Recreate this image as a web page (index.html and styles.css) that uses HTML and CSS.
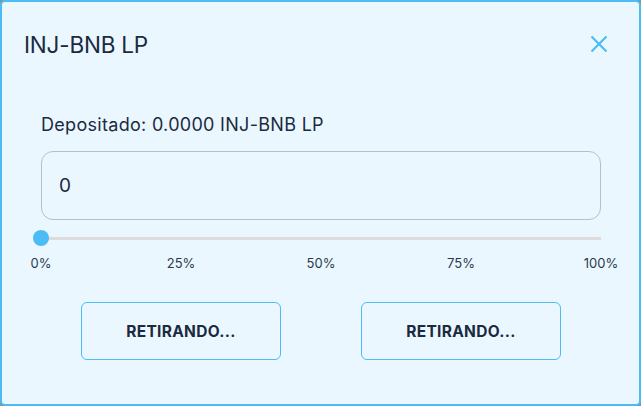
FILE: index.html
```html
<!DOCTYPE html>
<html lang="pt">
<head>
<meta charset="utf-8">
<link rel="stylesheet" href="styles.css">
</head>
<body>
<div class="modal">
  <div class="modal-header">
    <h2 class="modal-title">INJ-BNB LP</h2>
    <button class="close-btn" aria-label="Fechar">
      <svg width="18" height="18" viewBox="0 0 18 18"><path d="M1.5 1.5 L16.5 16.5 M16.5 1.5 L1.5 16.5" stroke="#4bbcf5" stroke-width="2.2" stroke-linecap="butt"/></svg>
    </button>
  </div>
  <div class="modal-body">
    <div class="deposited">Depositado: 0.0000 INJ-BNB LP</div>
    <div class="amount-input">0</div>
    <div class="slider">
      <div class="track"></div>
      <div class="thumb"></div>
    </div>
    <div class="marks">
      <span class="mark"><span>0%</span></span>
      <span class="mark"><span>25%</span></span>
      <span class="mark"><span>50%</span></span>
      <span class="mark"><span>75%</span></span>
      <span class="mark"><span>100%</span></span>
    </div>
    <div class="actions">
      <button class="action-btn">RETIRANDO...</button>
      <button class="action-btn">RETIRANDO...</button>
    </div>
  </div>
</div>
</body>
</html>
```
FILE: styles.css
```css
html, body {
  margin: 0;
  padding: 0;
  background: #8a8f94;
}
body {
  font-family: "Inter", "Lato", sans-serif;
  color: #1b2a3f;
}
.modal {
  width: 641px;
  height: 406px;
  box-sizing: border-box;
  border: 2px solid #4bbcf5;
  border-radius: 5px;
  background: #ebf7ff;
}
.modal-header {
  display: flex;
  align-items: center;
  justify-content: space-between;
  padding: 27px 31px 0 22px;
  height: 30px;
}
.modal-title {
  margin: 0;
  font-size: 22.5px;
  font-weight: 400;
  letter-spacing: -0.2px;
}
.close-btn {
  border: 0;
  background: none;
  padding: 0;
  width: 18px;
  height: 18px;
  display: flex;
}
.modal-body {
  padding: 55px 38px 0 39px;
}
.deposited {
  font-size: 18px;
  line-height: 22px;
  letter-spacing: 0.3px;
}
.amount-input {
  margin-top: 15px;
  height: 69px;
  box-sizing: border-box;
  border: 1px solid #b4bfcb;
  border-radius: 12px;
  padding: 0 17px;
  display: flex;
  align-items: center;
  font-size: 19px;
}
.slider {
  position: relative;
  height: 20px;
  margin-top: 9px;
}
.track {
  position: absolute;
  left: 0;
  right: 0;
  top: 8px;
  height: 3px;
  background: #dcdcdc;
}
.thumb {
  position: absolute;
  left: -8px;
  top: 1px;
  width: 16px;
  height: 16px;
  border-radius: 50%;
  background: #4bbcf5;
}
.marks {
  display: flex;
  justify-content: space-between;
  font-size: 13px;
  line-height: 16px;
  margin-top: 6px;
  color: #2a3a4e;
}
.mark {
  width: 0;
  display: flex;
  justify-content: center;
  white-space: nowrap;
}
.actions {
  display: grid;
  grid-template-columns: 1fr 1fr;
  justify-items: center;
  margin-top: 31px;
}
.action-btn {
  width: 200px;
  height: 58px;
  border: 1px solid #4bbcf5;
  border-radius: 6px;
  background: transparent;
  font-family: inherit;
  font-weight: 700;
  font-size: 15.5px;
  color: #1b2a3f;
  letter-spacing: 0.3px;
}
```
